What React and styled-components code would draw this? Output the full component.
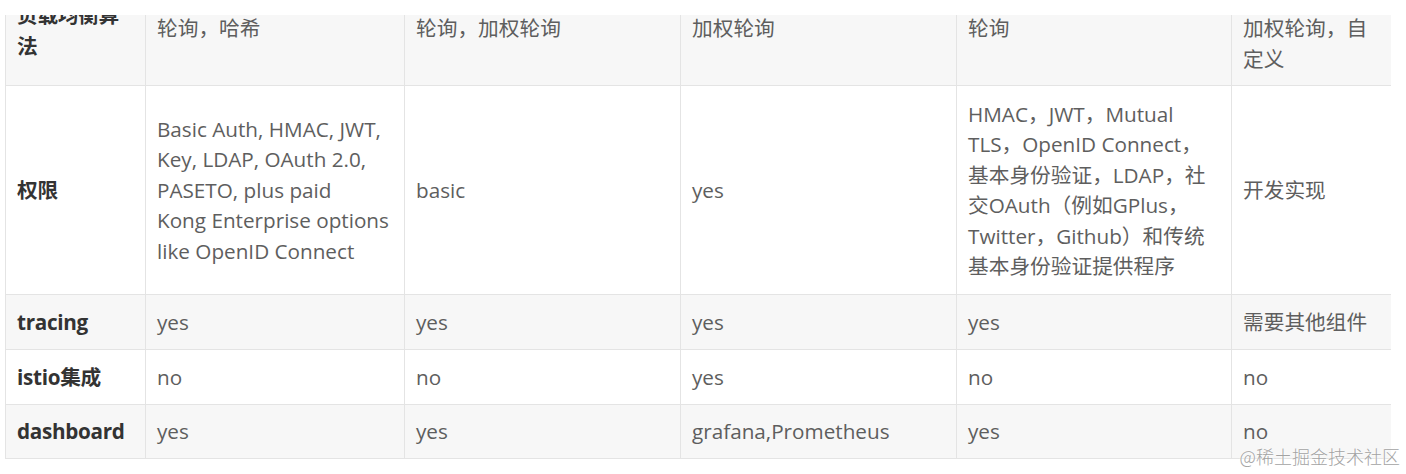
import React from "react";
import styled, { createGlobalStyle } from "styled-components";

const GlobalStyle = createGlobalStyle`
  html, body {
    margin: 0;
    padding: 0;
    background: #ffffff;
  }
  body {
    font-family: "Open Sans", "Noto Sans CJK SC", sans-serif;
  }
`;

const Page = styled.div`
  position: relative;
  width: 1406px;
  height: 474px;
  padding: 15px 0 0 5px;
  box-sizing: border-box;
  overflow: hidden;
`;

const Viewport = styled.div`
  width: 1386px;
  height: 444px;
  overflow: hidden;
`;

const Table = styled.table`
  margin-top: -20px;
  width: 1386px;
  border-collapse: collapse;
  table-layout: fixed;
  font-size: 20.7px;
  line-height: 30.5px;
  color: #5e5e5e;
`;

const Row = styled.tr`
  background: ${(p) => (p.$alt ? "#f7f7f7" : "#ffffff")};
  height: ${(p) => p.$h}px;
`;

const Cell = styled.td`
  border: 1px solid #e4e4e4;
  padding: ${(p) => (p.$top != null ? `${p.$top}px 11px 0` : "11px 11px")};
  vertical-align: ${(p) => (p.$top != null ? "top" : "middle")};
  white-space: nowrap;
`;

const Label = styled(Cell)`
  font-weight: 700;
  color: #333333;
  letter-spacing: -0.3px;
`;

const Watermark = styled.div`
  position: absolute;
  right: 6px;
  top: 444px;
  font-family: "Noto Sans CJK SC", sans-serif;
  font-weight: 300;
  font-size: 18px;
  line-height: 24px;
  color: #a3a3a3;
  text-shadow: 0 0 2px #fff, 0 0 2px #fff;
`;

const widths = [140, 259, 276, 276, 275, 160];

const lines = (arr) =>
  arr.map((l, i) => (
    <React.Fragment key={i}>
      {i > 0 && <br />}
      {l}
    </React.Fragment>
  ));

export default function App() {
  return (
    <>
      <GlobalStyle />
      <Page>
        <Viewport>
          <Table>
            <colgroup>
              {widths.map((w, i) => (
                <col key={i} style={{ width: w }} />
              ))}
            </colgroup>
            <tbody>
              <Row $alt $h={90}>
                <Label $top={4}>{lines(["负载均衡算", "法"])}</Label>
                <Cell $top={17}>轮询，哈希</Cell>
                <Cell $top={17}>轮询，加权轮询</Cell>
                <Cell $top={17}>加权轮询</Cell>
                <Cell $top={17}>轮询</Cell>
                <Cell $top={17}>{lines(["加权轮询，自", "定义"])}</Cell>
              </Row>
              <Row $h={209}>
                <Label>权限</Label>
                <Cell>
                  {lines([
                    "Basic Auth, HMAC, JWT,",
                    "Key, LDAP, OAuth 2.0,",
                    "PASETO, plus paid",
                    "Kong Enterprise options",
                    "like OpenID Connect",
                  ])}
                </Cell>
                <Cell>basic</Cell>
                <Cell>yes</Cell>
                <Cell>
                  {lines([
                    "HMAC，JWT，Mutual",
                    "TLS，OpenID Connect，",
                    "基本身份验证，LDAP，社",
                    "交OAuth（例如GPlus，",
                    "Twitter，Github）和传统",
                    "基本身份验证提供程序",
                  ])}
                </Cell>
                <Cell>开发实现</Cell>
              </Row>
              <Row $alt $h={55}>
                <Label>tracing</Label>
                <Cell>yes</Cell>
                <Cell>yes</Cell>
                <Cell>yes</Cell>
                <Cell>yes</Cell>
                <Cell>需要其他组件</Cell>
              </Row>
              <Row $h={55}>
                <Label>istio集成</Label>
                <Cell>no</Cell>
                <Cell>no</Cell>
                <Cell>yes</Cell>
                <Cell>no</Cell>
                <Cell>no</Cell>
              </Row>
              <Row $alt $h={54}>
                <Label>dashboard</Label>
                <Cell>yes</Cell>
                <Cell>yes</Cell>
                <Cell>grafana,Prometheus</Cell>
                <Cell>yes</Cell>
                <Cell>no</Cell>
              </Row>
            </tbody>
          </Table>
        </Viewport>
        <Watermark>@稀土掘金技术社区</Watermark>
      </Page>
    </>
  );
}
